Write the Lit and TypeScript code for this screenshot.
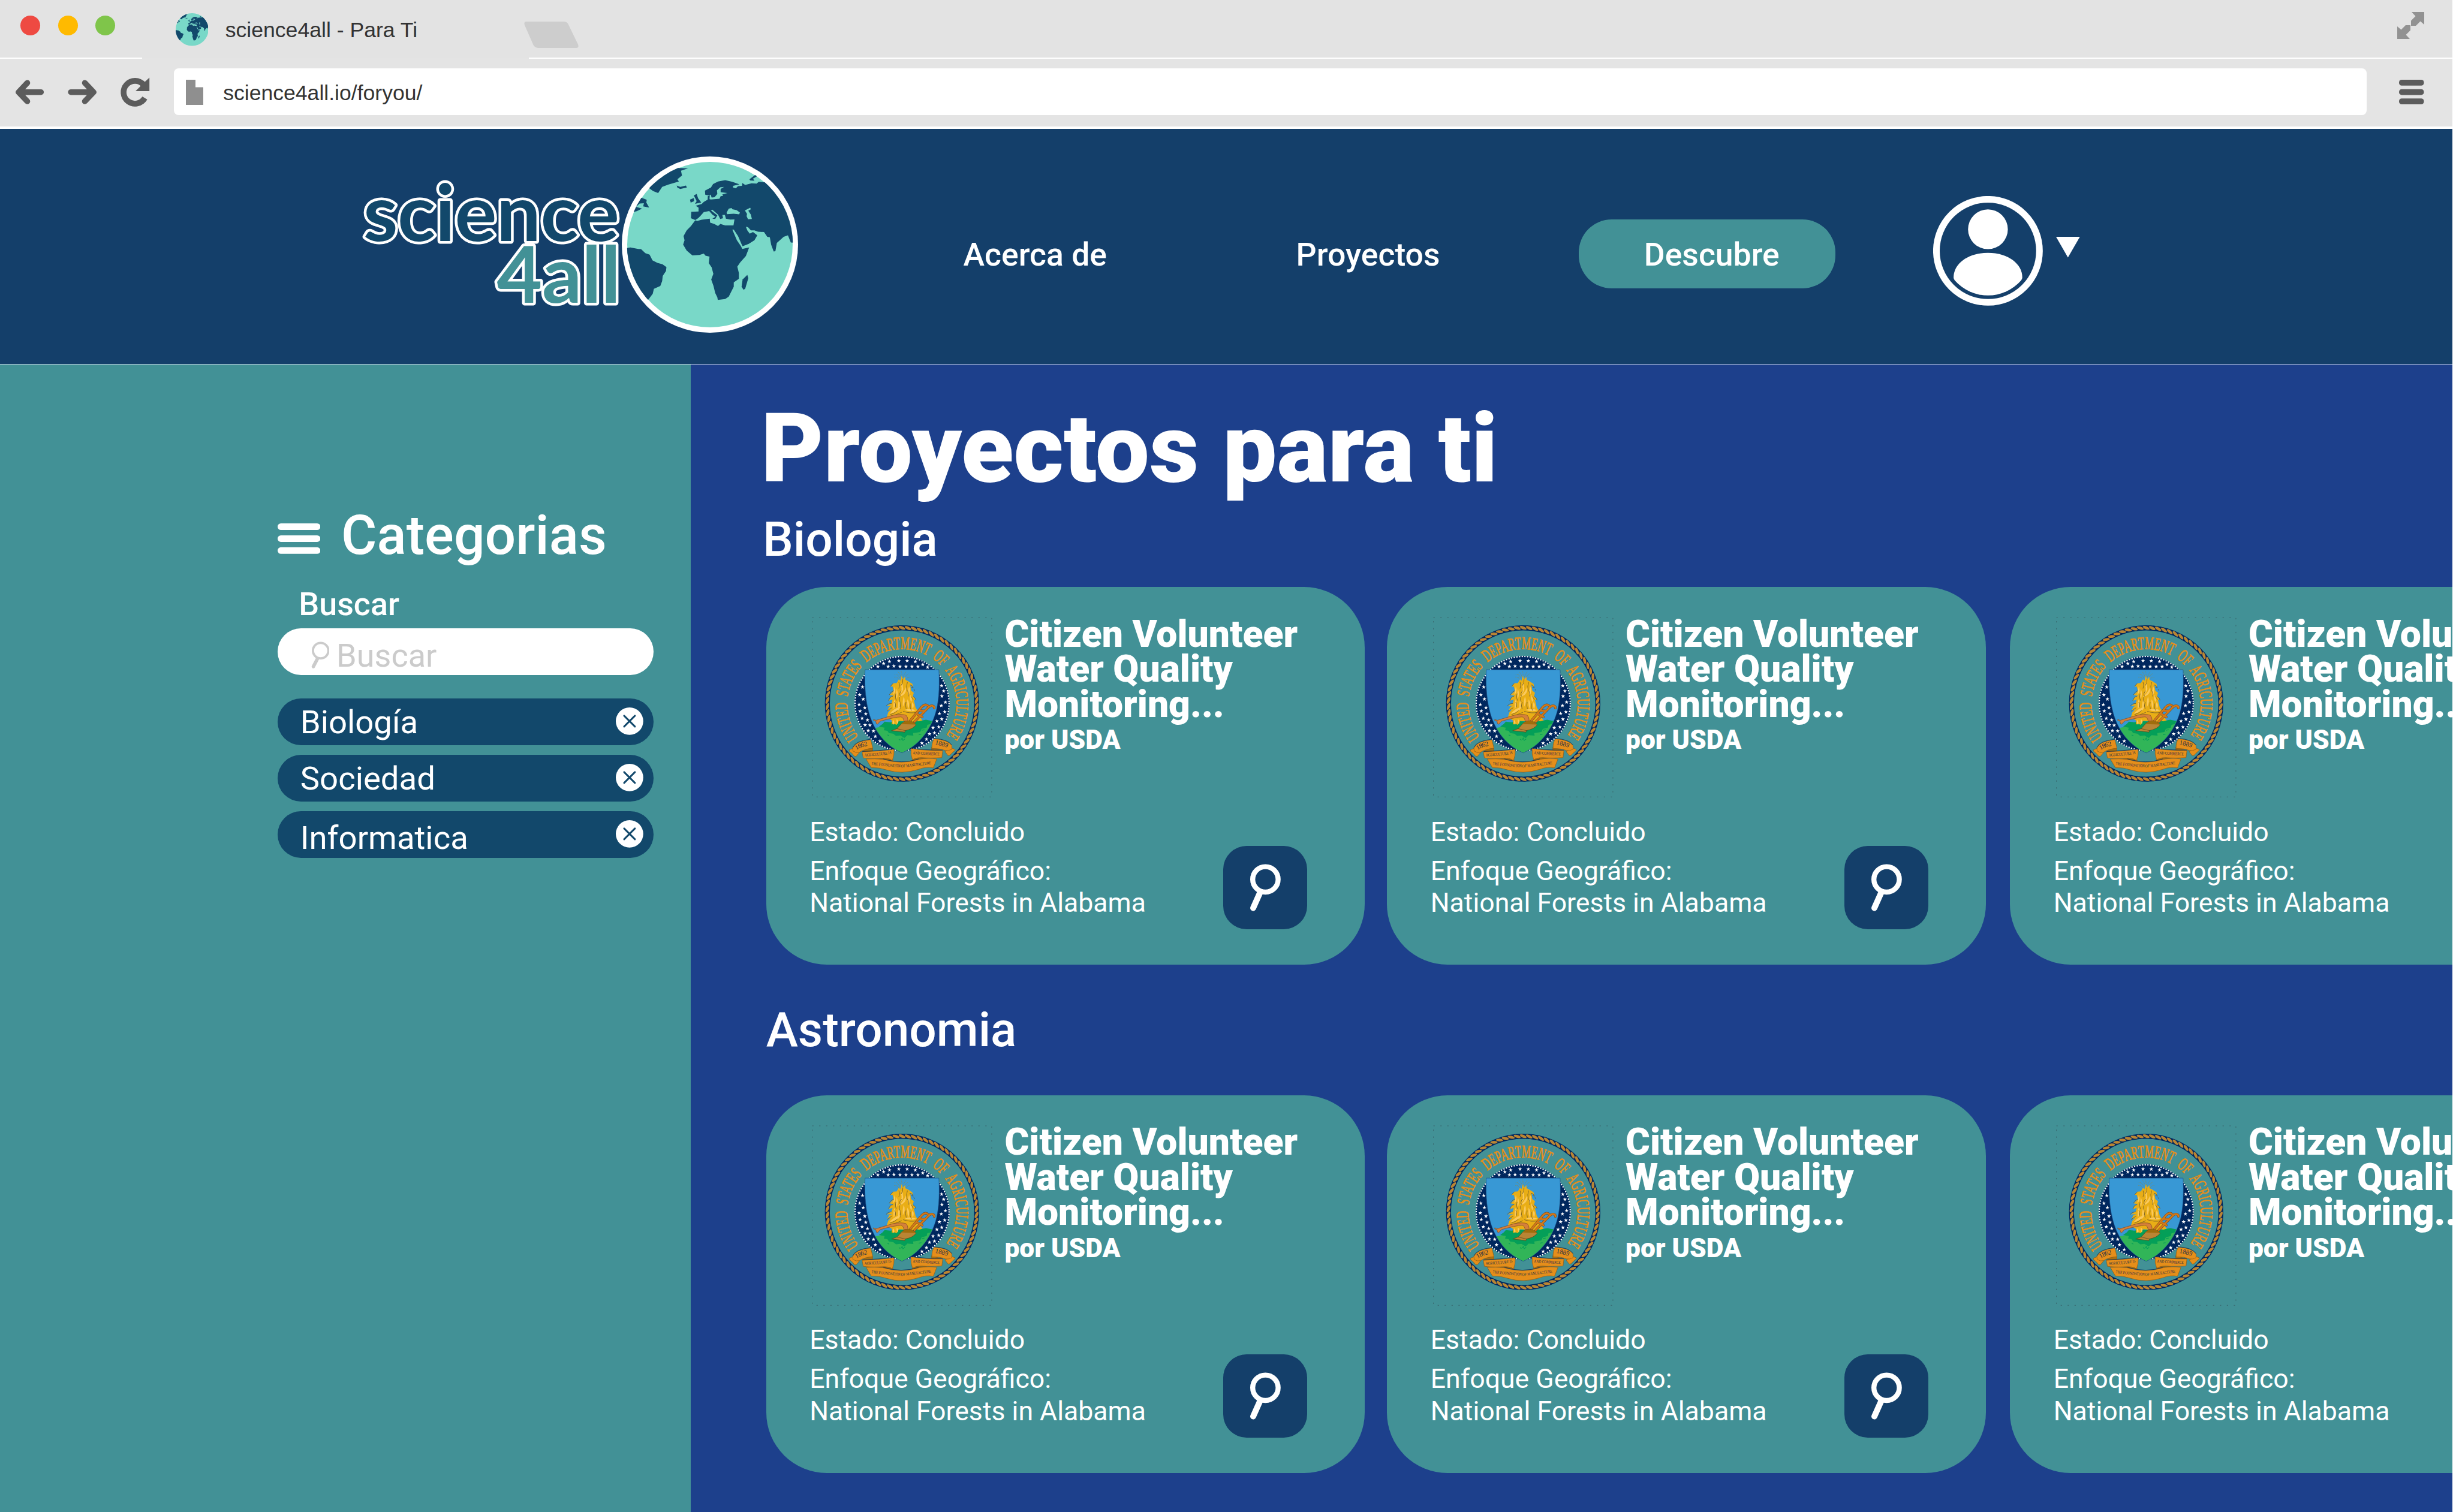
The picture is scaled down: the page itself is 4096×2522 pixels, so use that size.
import { LitElement, html, svg, css } from "lit";
import { customElement, property } from "lit/decorators.js";

const LAND = [
  "M530 470L500 510L470 540L448 580L455 610L445 640L470 682L510 716L560 712L590 703L602 718L630 724L625 770L645 800L657 845L642 885L658 930L670 980L685 1010L688 1028L740 1022L765 1005L785 965L800 935L800 905L836 880L836 840L825 795L845 765L885 720L908 660L860 670L850 650L822 610L790 535L800 535L830 580L856 640L862 652L905 635L945 610L965 575L935 552L912 563L895 540L885 515L900 518L920 540L945 540L970 550L1012 552L1035 585L1053 588L1062 640L1080 688L1092 686L1102 628L1150 585L1180 575L1200 625L1260 628L1260 400L1020 203L975 200L960 212L925 210L880 222L860 208L858 228L830 230L815 245L795 240L795 228L840 218L790 200L740 188L690 198L655 215L640 240L598 262L600 290L618 294L638 290L645 310L665 308L685 285L682 260L705 238L732 235L708 250L708 272L755 278L720 288L725 298L708 300L700 318L640 324L630 322L632 292L618 300L617 325L590 340L575 355L533 368L553 380L553 408L502 410L500 455L530 468L550 455L565 440L590 412L628 405L650 430L672 445L650 458L670 460L685 435L640 400L650 395L690 430L705 460L725 455L720 432L738 432L745 458L775 465L805 463L798 505L740 505L706 495L690 510L665 496L634 486L632 458L575 466L545 474Z",
  "M520 295L540 285L550 315L572 345L528 354L540 335Z",
  "M493 325L520 313L522 335L498 346Z",
  "M400 226L425 235L465 226L471 240L425 250L405 241Z",
  "M200 240L400 70L412 103L480 105L430 122L437 155L405 182L415 198L340 220L298 235L270 278L235 265Z",
  "M90 300L155 312L190 326L187 345L207 380L165 372L170 350L140 352L115 375L157 388L120 406L60 420Z",
  "M30 667L75 660L130 670L150 672L180 700L210 710L230 750L265 768L300 778L328 798L325 825L302 860L298 895L285 930L240 950L232 985L200 1027L0 1000Z",
  "M895 852L902 875L880 950L868 956L855 935L862 885Z",
  "M910 182L955 148L965 160L935 178L945 192L915 190Z",
];
const SEAS = [
  "M750 415L765 388L785 384L790 392L820 398L843 415L838 428L800 423L752 427Z",
  "M878 400L915 381L920 392L902 402L920 430L927 460L900 462L890 440L893 425Z",
];

@customElement("earth-globe")
export class EarthGlobe extends LitElement {
  @property({ type: Boolean }) ring = false;
  static styles = css`
    :host { display: block; }
    svg { display: block; width: 100%; height: 100%; }
  `;
  render() {
    return html`<svg viewBox=${this.ring ? "15 22 1236 1236" : "53 60 1160 1160"}>
      <defs><clipPath id="disc"><circle cx="633" cy="640" r="582" /></clipPath></defs>
      ${this.ring ? svg`<circle cx="633" cy="640" r="618" fill="#fff" />` : null}
      <circle cx="633" cy="640" r="580" fill="#79d8c8" />
      <g clip-path="url(#disc)">
        ${LAND.map((d) => svg`<path d=${d} fill="#12486b" />`)}
        ${SEAS.map((d) => svg`<path d=${d} fill="#79d8c8" />`)}
      </g>
    </svg>`;
  }
}

const STARS: [number, number][] = [
  [493, 391], [533, 370], [574, 356], [640, 350], [698, 350], [756, 356], [808, 377], [842, 395],
  [565, 391], [605, 388], [648, 391], [690, 391], [732, 391], [774, 391],
  [385, 535], [365, 590], [390, 620], [361, 657], [401, 680], [368, 704], [408, 724], [382, 754],
  [420, 767], [403, 801], [437, 803], [425, 841], [462, 844], [475, 881], [508, 914],
  [940, 526], [955, 563], [942, 599], [967, 642], [938, 665], [962, 709], [925, 721], [941, 760],
  [907, 773], [920, 815], [880, 821], [890, 857], [855, 864], [834, 901], [802, 928],
];
const STAR = "M0-15L3.6-5H14L5.6 1.6L8.8 12L0 5.6L-8.8 12L-5.6 1.6L-14-5H-3.6Z";
const STRANDS = Array.from({ length: 78 }, (_, i) => (i * 360) / 78);
const STRAWS = [
  "M655 520Q690 545 645 590Q668 550 655 520Z", "M690 535Q700 590 635 606Q672 580 690 535Z",
  "M610 530Q625 565 600 590Q604 560 610 530Z", "M625 545Q640 590 622 620Q618 580 625 545Z",
  "M675 600Q690 640 668 675Q664 630 675 600Z", "M700 620Q722 650 706 690Q696 650 700 620Z",
  "M610 620Q622 660 604 690Q598 650 610 620Z", "M640 625Q655 660 636 700Q630 660 640 625Z",
  "M735 640Q752 660 738 690Q728 665 735 640Z", "M660 505Q675 520 664 545Q654 525 660 505Z",
  "M575 722Q610 680 655 672Q630 710 575 722Z", "M680 695Q720 680 762 698Q720 712 680 695Z",
  "M600 765Q612 780 606 800Q590 785 600 765Z", "M625 760Q642 770 632 795Q620 780 625 760Z",
  "M712 530Q728 560 706 600Q700 565 712 530Z", "M720 590Q738 610 728 640Q712 615 720 590Z",
];
const STRAW_LINES =
  "M600 510Q590 515 582 530M605 560Q585 565 572 590M598 600Q578 600 568 630M590 650Q560 650 552 668M592 680Q570 690 556 705M640 500Q650 520 640 545M668 480Q672 505 655 525M700 500Q690 530 698 560M716 520Q735 520 740 538M660 560Q640 575 650 600M620 580Q612 600 622 630M655 640Q645 665 655 690M690 640Q684 660 692 690M725 600Q735 610 742 625M740 600Q756 610 760 628M720 650Q716 680 728 700M630 700Q610 720 580 728M670 705Q720 722 765 712M580 740Q620 730 660 712M700 560Q712 575 706 600M610 640Q620 650 616 676M645 605Q640 625 648 640";

@customElement("usda-seal")
export class UsdaSeal extends LitElement {
  static styles = css`
    :host { display: block; width: 313.6px; height: 313.6px; }
    svg { display: block; width: 100%; height: 100%; }
    .arc { font: 400 126px "Liberation Serif", serif; fill: #e58e1a; stroke: #e58e1a; stroke-width: 4; word-spacing: 36px; }
    .year { font: 400 46px "Liberation Serif", serif; fill: #1b2c48; }
    .motto { font: 400 29px "Liberation Serif", serif; fill: #1b2c48; }
  `;
  render() {
    return html`<svg viewBox="0 0 1320 1320" role="img">
      <defs>
        <path id="legend" d="M357.4 885.2A383 383 0 1 1 974.9 870.4" />
        <path id="left" d="M399 1021Q495 1019 590 1004" />
        <path id="right" d="M738 1006Q830 1010 926 1015" />
        <path id="base" d="M448 1080Q560 1092 660 1099Q770 1090 872 1075" />
        <path id="y1" d="M342 977Q380 952 428 946" />
        <path id="y2" d="M893 938Q945 946 985 963" />
        <clipPath id="shield"><path d="M403 413H921C926 500 924 610 905 690C878 805 800 935 662 997C524 935 450 810 424 690C404 610 398 500 403 413Z" /></clipPath>
      </defs>
      <g fill="none" stroke="#36535c" stroke-width="3" stroke-dasharray="9 39.6">
        <path d="M32 46H1292" /><path d="M62 1306H1292" /><path d="M32 72V1306" /><path d="M1292 50V1306" />
      </g>
      <g transform="translate(662 650) scale(1 1.014)">
        <circle r="524" fill="none" stroke="#00275e" stroke-width="35" />
        ${STRANDS.map((a) => svg`<g transform="rotate(${a}) translate(0 -524) rotate(22)">
          <ellipse rx="27" ry="13" fill="#00275e" /><ellipse rx="25" ry="9.8" fill="#b98534" /></g>`)}
      </g>
      <text class="arc"><textPath href="#legend" textLength="1690" lengthAdjust="spacingAndGlyphs">UNITED STATES DEPARTMENT OF AGRICULTURE</textPath></text>
      <circle cx="662.5" cy="650" r="334" fill="#00275e" />
      <circle cx="662.5" cy="650" r="330" fill="none" stroke="#fff" stroke-width="10" stroke-linecap="round" stroke-dasharray="0 18.85" />
      ${STARS.map(([x, y]) => svg`<path transform="translate(${x} ${y})" d=${STAR} fill="#fff" />`)}
      <g clip-path="url(#shield)">
        <path d="M390 400H940V1000H390Z" fill="#3898d5" />
        <path d="M440 830L474 822L520 812L600 790L800 770L872 772L930 770V1000H440Z" fill="#31b558" />
        <path d="M525 795L540 778L580 782L620 775L760 778L830 764L872 772L862 795L840 800L835 820L800 828L790 850L740 858L742 876L700 872L680 892L650 874L620 878L600 862L570 858L560 842L535 838L540 820L500 812Z" fill="#049f58" />
        <path d="M655 905l8-12l6 16l14-10M640 900l10 8M780 870l18-4M800 838l20-4M560 870l12 6" stroke="#049f58" stroke-width="5" fill="none" />
        <path d="M645 470Q630 440 610 445M655 465Q645 435 632 425M662 460Q662 435 655 420M670 465Q680 440 692 425M680 470Q690 450 708 440M690 480Q705 462 720 466M640 480Q625 462 608 465" stroke="#97883d" stroke-width="4" stroke-dasharray="5 6" fill="none" />
        <path d="M660 455L668 480L684 462L686 484L704 492L735 512L738 535L720 520L726 560L745 575L738 600L760 620L745 625L758 680L772 700L780 735L806 768L780 776L760 765L740 782L700 776L640 772L625 800L605 792L590 798L592 770L555 745L565 712L585 690L560 700L572 675L592 665L555 668L590 645L596 622L570 630L582 605L605 596L575 590L604 562L596 530L580 532L600 508L625 506L640 480L650 490Z" fill="#e9ae16" />
        ${STRAWS.map((d) => svg`<path d=${d} fill="#fac95d" />`)}
        <path d=${STRAW_LINES} stroke="#6b5a2b" stroke-width="3.5" fill="none" />
        <path d="M728 535L742 540M745 548L752 560" stroke="#4c6060" stroke-width="4" />
      </g>
      <path d="M403 413H921C926 500 924 610 905 690C878 805 800 935 662 997C524 935 450 810 424 690C404 610 398 500 403 413Z" fill="none" stroke="#1b4f86" stroke-width="3" />
      <g stroke-linejoin="round" stroke-linecap="round">
        <path d="M720 770L800 675Q825 650 843 665M750 778L850 675Q868 660 880 668Q890 672 888 682M768 724L804 744M788 700L822 702" fill="none" stroke="#7d4a22" stroke-width="17" />
        <path d="M720 770L800 675Q825 650 843 665M750 778L850 675Q868 660 880 668Q890 672 888 682M768 724L804 744M788 700L822 702" fill="none" stroke="#d27919" stroke-width="12" />
        <path d="M464 762L480 768L600 732Q660 722 690 732Q705 745 704 772L676 774Q672 748 655 744Q610 746 510 774L490 796L482 792L478 774L464 770Z" fill="#d5803a" stroke="#7d4a22" stroke-width="3" />
        <path d="M590 840L628 826L660 790Q680 770 710 772Q745 776 760 800Q740 830 684 840L682 850Z" fill="#b98534" stroke="#5a431c" stroke-width="3" />
        <path d="M660 794Q680 770 710 772Q745 776 758 798Z" fill="#a06d0c" />
        <path d="M628 827L684 840" stroke="#5a431c" stroke-width="3" />
      </g>
      <g stroke="#8c5a17" stroke-width="3" stroke-linejoin="round">
        <path d="M292 975L318 965L362 996L340 1022L328 1020Q310 995 292 985Z" fill="#e58e1a" />
        <path d="M1034 972L1008 962L964 988L985 1016L998 1014Q1020 990 1034 980Z" fill="#e58e1a" />
        <path d="M384 990Q410 965 456 962V986Z" fill="#a9700f" />
        <path d="M870 958L940 980V990L870 980Z" fill="#a9700f" />
        <path d="M500 1040L590 1030L600 1052Z" fill="#a9700f" />
        <path d="M740 1030L836 1034L735 1052Z" fill="#a9700f" />
        <path d="M316 962Q335 915 442 904Q450 935 457 964Q400 968 364 992Q340 1000 318 984Z" fill="#e58e1a" />
        <path d="M888 898Q985 905 1012 945L1012 972Q985 985 965 980Q930 965 872 966Q870 925 888 898Z" fill="#e58e1a" />
        <path d="M382 990Q500 985 606 972Q610 1010 594 1052Q580 1030 500 1036Q430 1038 390 1032Z" fill="#e58e1a" />
        <path d="M726 966Q830 982 948 980L942 1030Q860 1035 800 1030Q755 1030 736 1046Q720 1005 726 966Z" fill="#e58e1a" />
        <path d="M410 1040Q470 1036 530 1042Q660 1082 780 1042Q850 1030 906 1040L882 1102Q830 1092 780 1112Q660 1150 560 1118Q500 1098 446 1100Z" fill="#e58e1a" />
      </g>
      <path d="M384 990Q500 985 606 972M726 966Q830 982 948 980M530 1042Q660 1082 780 1042M316 962Q335 915 442 904M888 898Q985 905 1012 945" transform="translate(0 -3)" fill="none" stroke="#00275e" stroke-width="3" />
      <text class="year"><textPath href="#y1" textLength="84">1862</textPath></text>
      <text class="year"><textPath href="#y2" textLength="90">1889</textPath></text>
      <text class="motto"><textPath href="#left" textLength="190" lengthAdjust="spacingAndGlyphs">AGRICULTURE IS</textPath></text>
      <text class="motto"><textPath href="#right" textLength="187" lengthAdjust="spacingAndGlyphs">AND COMMERCE</textPath></text>
      <text class="motto"><textPath href="#base" textLength="422" lengthAdjust="spacingAndGlyphs">THE FOUNDATION OF MANUFACTURE</textPath></text>
    </svg>`;
  }
}

interface Project {
  title: string[];
  author: string;
  status: string;
  place: string;
}

@customElement("project-card")
export class ProjectCard extends LitElement {
  @property({ attribute: false }) project!: Project;
  static styles = css`
    :host { display: block; flex: none; box-sizing: border-box; width: 998.4px; height: 630.5px; padding: 40.5px 96.1px 0 69.3px; border-radius: 101px; background: #429196; color: #fff; }
    .top { display: flex; height: 313.6px; }
    .heading { margin-left: 14.8px; padding-top: 9.2px; white-space: nowrap; }
    h3 { margin: 0; font-size: 62.4px; line-height: 58.5px; font-weight: 900; }
    .author { margin: 4.4px 0 0; font-size: 44.3px; line-height: 52px; font-weight: 900; }
    .bottom { display: flex; justify-content: space-between; align-items: flex-start; margin-top: 27.7px; }
    .info { padding: 1px 0 0 3.2px; font-size: 44.6px; line-height: 53.7px; white-space: nowrap; }
    .info p { margin: 0; }
    .focus { padding-top: 11.3px; }
    .open { display: block; width: 139.5px; height: 138.8px; margin: 50.5px 0 0; padding: 0; border: 0; border-radius: 39px; background: #143f6a; }
    .open svg { display: block; width: 139.5px; height: 138.8px; }
  `;
  render() {
    const p = this.project;
    return html`
      <div class="top">
        <usda-seal></usda-seal>
        <div class="heading">
          <h3>${p.title.map((line) => html`<div>${line}</div>`)}</h3>
          <p class="author">${p.author}</p>
        </div>
      </div>
      <div class="bottom">
        <div class="info">
          <p>${p.status}</p>
          <p class="focus">Enfoque Geográfico:</p>
          <p>${p.place}</p>
        </div>
        <button class="open">
          <svg viewBox="0 0 139.5 138.8" fill="none" stroke="#fff">
            <circle cx="70.4" cy="55.8" r="21.2" stroke-width="8.4" />
            <path d="M61.8 77L50 103.5" stroke-width="10" stroke-linecap="round" />
          </svg>
        </button>
      </div>`;
  }
}

@customElement("browser-chrome")
export class BrowserChrome extends LitElement {
  static styles = css`
    :host { display: block; height: 214.8px; background: #fff; color: #333; font: 35.6px/44px "Liberation Sans", Arial, sans-serif; }
    .tabs { display: flex; height: 95.5px; padding: 0 47.8px 0 34.3px; box-sizing: border-box; background: #e3e3e3; }
    .lights { display: flex; gap: 29.8px; margin-top: 25.9px; }
    .light { width: 32.8px; height: 32.8px; border-radius: 50%; }
    .red { background: #ee4a42; }
    .amber { background: #ffba00; }
    .green { background: #7fc54a; }
    .tab { display: flex; width: 581.9px; margin-left: 100.3px; }
    .fav { width: 54.6px; height: 54.6px; margin-top: 22px; }
    .title { margin: 27.6px 0 0 28.6px; }
    .new { margin-top: 36.4px; }
    .expand { margin: 19.5px 0 0 auto; }
    svg { display: block; flex: none; }
    .seam { display: flex; justify-content: space-between; height: 2.6px; background: #fff; }
    .joint { width: 645px; margin-left: 237px; background: #e4e4e4; }
    .bar { display: flex; align-items: flex-start; height: 112.9px; background: #e4e4e4; }
    .nav { margin: 29px 0 0 24px; }
    .address { display: flex; flex: none; width: 3656.9px; height: 78.2px; margin: 16.2px 0 0 36px; border-radius: 8px; background: #fff; }
    .page { margin: 18.7px 0 0 20.4px; }
    .url { margin: 18.6px 0 0 32.8px; }
    .menu { margin: 35.2px 0 0 54.2px; }
  `;
  render() {
    return html`
      <div class="tabs">
        <div class="lights"><div class="light red"></div><div class="light amber"></div><div class="light green"></div></div>
        <div class="tab">
          <earth-globe class="fav"></earth-globe>
          <div class="title">science4all - Para Ti</div>
        </div>
        <svg class="new" width="92" height="44" viewBox="0 0 92 44"><path d="M4 0H66Q72 0 74 5L90 38Q92 44 87 44H25Q18 44 15.5 39L1 6Q-1 0 4 0Z" fill="#cdcdcd" /></svg>
        <svg class="expand" width="45" height="45" viewBox="0 0 45 45" fill="#929292"><path d="M24 0H45V21L38.5 15.5L31 23H23V14.5L30.5 7ZM21 45H0V24L6.5 29.5L14 22H22V30.5L14.5 38Z" /></svg>
      </div>
      <div class="seam"><div class="joint"></div></div>
      <div class="bar">
        <svg class="nav" width="230" height="54" viewBox="24 127 230 54" fill="none" stroke="#5c5c5c" stroke-width="9.6" stroke-linecap="round" stroke-linejoin="round">
          <path d="M68.3 153.7H34M45.5 138.3L31 153.7L45.5 169" />
          <path d="M118.2 153.7H152.5M141.5 138.3L156 153.7L141.5 169" />
          <path d="M241.5 163.5A19 19 0 1 1 239.5 141.5" stroke-linecap="butt" />
          <path d="M249.2 129.5V152H226L234.5 143.5L232 137H241Z" fill="#5c5c5c" stroke="none" />
        </svg>
        <div class="address">
          <svg class="page" width="29" height="42" viewBox="0 0 29 42"><path d="M0 0H16V12.5H29V42H0Z" fill="#8f8f8f" /></svg>
          <div class="url">science4all.io/foryou/</div>
        </div>
        <svg class="menu" width="42" height="41" viewBox="0 0 42 41" fill="#5c5c5c"><rect width="41.5" height="9.7" rx="4.5" /><rect y="15.7" width="41.5" height="9.7" rx="4.5" /><rect y="31.3" width="41.5" height="9.7" rx="4.5" /></svg>
      </div>`;
  }
}

@customElement("site-header")
export class SiteHeader extends LitElement {
  static styles = css`
    :host { display: flex; align-items: flex-start; box-sizing: border-box; height: 393.2px; border-bottom: 1.5px solid #c3d0e4; background: #143f6a; color: #fff; }
    svg { display: block; flex: none; }
    .logo { display: flex; width: 736px; margin: 35.2px 0 0 600px; }
    .word { width: 436px; flex: none; }
    .word text { font-family: Lato, sans-serif; font-weight: 700; font-size: 131px; stroke: #fff; stroke-width: 9px; stroke-linejoin: round; paint-order: stroke; }
    .globe { width: 294px; height: 294px; margin: 11.4px 0 0 1px; flex: none; }
    nav { display: grid; grid-template-columns: 555px 471.2px 428.4px; height: 114.8px; margin: 151.5px 0 0 270.6px; font-size: 53.5px; line-height: 118.8px; font-weight: 500; }
    .active { padding-left: 109px; border-radius: 55px; background: #429196; height: 114.8px; box-sizing: border-box; }
    .avatar { margin: 112.2px 0 0 162.6px; }
    .caret { margin: 180.4px 0 0 22px; }
  `;
  render() {
    return html`
      <div class="logo">
        <svg class="word" width="436" height="300" viewBox="600 250 436 300">
          <text x="606" y="402" fill="#12486b" textLength="427">science</text>
          <text x="828.5" y="505" fill="#429196" textLength="206.5">4all</text>
        </svg>
        <earth-globe class="globe" ring></earth-globe>
      </div>
      <nav><div>Acerca de</div><div>Proyectos</div><div class="active">Descubre</div></nav>
      <svg class="avatar" width="182.8" height="182.8" viewBox="-91.7 -91.7 183.4 183.4" fill="#fff">
        <circle r="86.2" fill="none" stroke="#fff" stroke-width="11.1" />
        <circle cy="-36.1" r="33.3" />
        <path d="M-57.5 44.5C-57.5 22 -34 3.4 0 3.4S57.5 22 57.5 44.5Q57.5 47 55.5 49.5A73.8 73.8 0 0 1 -55.5 49.5Q-57.5 47 -57.5 44.5Z" />
      </svg>
      <svg class="caret" width="40" height="35" viewBox="0 0 40 35"><path d="M0 0H39.7L19.8 34.4Z" fill="#fff" /></svg>`;
  }
}

@customElement("category-sidebar")
export class CategorySidebar extends LitElement {
  static styles = css`
    :host { display: block; flex: none; box-sizing: border-box; width: 1151.5px; padding: 235.3px 61.6px 0 463.1px; background: #429196; color: #fff; }
    svg { display: block; flex: none; }
    .head { display: flex; align-items: flex-start; gap: 34.5px; }
    .head svg { margin-top: 29.9px; }
    h2 { margin: 0; font-size: 91.2px; line-height: 100px; font-weight: 500; }
    label { display: block; margin: 34.8px 0 9.8px; padding-left: 35.2px; font-size: 53.8px; line-height: 60px; font-weight: 500; }
    .search { display: flex; height: 77.8px; margin-bottom: 39.2px; padding-left: 50px; border-radius: 39px; background: #fff; color: #cbcbcb; font-size: 54px; line-height: 92.4px; }
    .search svg { margin-right: 12px; }
    .pill { display: flex; align-items: flex-start; justify-content: space-between; box-sizing: border-box; height: 78.2px; margin-bottom: 15.9px; padding: 0 16.8px 0 37.6px; border-radius: 39.1px; background: #12486b; font-size: 54.5px; line-height: 78.4px; }
    .pill svg { margin-top: 15.2px; }
    .low { line-height: 88.6px; }
  `;
  render() {
    return html`
      <div class="head">
        <svg width="71.4" height="50.8" viewBox="0 0 71.4 50.8" fill="#fff"><rect width="71.4" height="11" rx="5.5" /><rect y="19.9" width="71.4" height="11" rx="5.5" /><rect y="39.8" width="71.4" height="11" rx="5.5" /></svg>
        <h2>Categorias</h2>
      </div>
      <label>Buscar</label>
      <div class="search">
        <svg width="36" height="77.8" viewBox="513.1 1047.9 36 77.8" fill="none" stroke="#cbcbcb">
          <circle cx="534.9" cy="1085.2" r="12.9" stroke-width="3.8" />
          <path d="M529.6 1098.5L522.7 1111.8" stroke-width="5.6" stroke-linecap="round" />
        </svg>
        <div>Buscar</div>
      </div>
      ${["Biología", "Sociedad", "Informatica"].map(
        (name, i) => html`<div class="pill">
          <div class=${i === 2 ? "low" : ""}>${name}</div>
          <svg width="45.8" height="45.8" viewBox="-22.9 -22.9 45.8 45.8"><circle r="22.9" fill="#fff" /><path d="M-9-9L9 9M9-9L-9 9" stroke="#12486b" stroke-width="2.9" stroke-linecap="round" /></svg>
        </div>`
      )}`;
  }
}

const PROJECT: Project = {
  title: ["Citizen Volunteer", "Water Quality", "Monitoring..."],
  author: "por USDA",
  status: "Estado: Concluido",
  place: "National Forests in Alabama",
};
const SECTIONS = [
  { name: "Biologia", projects: [PROJECT, PROJECT, PROJECT] },
  { name: "Astronomia", projects: [PROJECT, PROJECT, PROJECT] },
];

@customElement("app-root")
export class AppRoot extends LitElement {
  static styles = css`
    :host { display: flex; flex-direction: column; box-sizing: border-box; width: 4096px; height: 2522px; padding-right: 5.6px; overflow: hidden; font-family: Roboto, sans-serif; background: #fff; }
    .body { display: flex; flex: 1; min-height: 0; }
    main { flex: 1; min-width: 0; overflow: hidden; box-sizing: border-box; padding: 46.2px 0 0 126.2px; background: #1d408c; color: #fff; }
    h1 { margin: 0 0 10.4px -8.4px; font-size: 160.5px; line-height: 188px; font-weight: 900; }
    h2 { margin: 0 0 32.3px; font-size: 80.2px; line-height: 94px; font-weight: 500; text-indent: -5.5px; }
    .row { display: flex; gap: 37.2px; }
    .row :nth-child(3) { margin-left: 3.4px; }
    h2.next { margin: 61.8px 0 61.4px; text-indent: 0; }
  `;
  render() {
    return html`
      <browser-chrome></browser-chrome>
      <site-header></site-header>
      <div class="body">
        <category-sidebar></category-sidebar>
        <main>
          <h1>Proyectos para ti</h1>
          ${SECTIONS.map(
            (s, i) => html`<h2 class=${i ? "next" : ""}>${s.name}</h2>
              <div class="row">${s.projects.map((p) => html`<project-card .project=${p}></project-card>`)}</div>`
          )}
        </main>
      </div>`;
  }
}
